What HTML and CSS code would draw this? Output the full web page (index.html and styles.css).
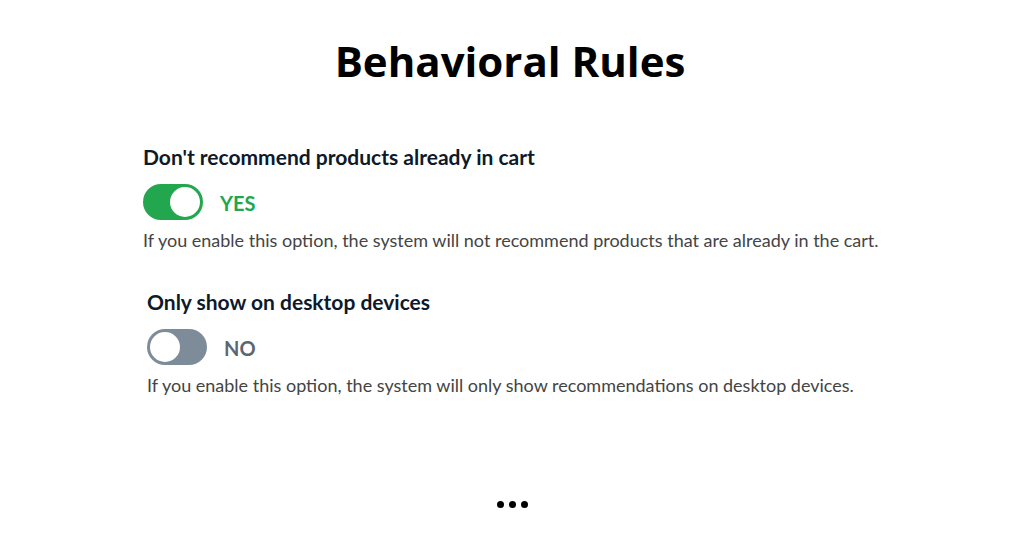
FILE: index.html
```html
<!DOCTYPE html>
<html>
<head>
    <meta charset="utf-8">
    <link rel="stylesheet" href="styles.css">
</head>
<body>
<div class="page">
    <h1 class="title">Behavioral Rules</h1>

    <div class="rule">
        <div class="rule-label">Don't recommend products already in cart</div>
        <div class="rule-switch">
            <span class="toggle toggle-on"><span class="knob"></span></span>
            <span class="state state-on">YES</span>
        </div>
        <p class="rule-help">If you enable this option, the system will not recommend products that are already in the cart.</p>
    </div>

    <div class="rule rule-second">
        <div class="rule-label">Only show on desktop devices</div>
        <div class="rule-switch">
            <span class="toggle toggle-off"><span class="knob"></span></span>
            <span class="state state-off">NO</span>
        </div>
        <p class="rule-help">If you enable this option, the system will only show recommendations on desktop devices.</p>
    </div>

    <div class="more">
        <span></span><span></span><span></span>
    </div>
</div>
</body>
</html>
```

FILE: styles.css
```css
body {
    margin: 0;
    background: #fff;
    font-family: Lato, "Open Sans", sans-serif;
}

.page {
    width: 738px;
    margin: 0 auto;
}

.title {
    margin: 36px 0 0;
    padding-right: 4px;
    font-family: "Open Sans", sans-serif;
    font-weight: 700;
    font-size: 42px;
    line-height: 50px;
    text-align: center;
    color: #000;
}

.rule {
    margin-top: 58px;
}

.rule-second {
    margin-top: 37px;
    margin-left: 4px;
}

.rule-label {
    font-weight: 700;
    font-size: 21px;
    line-height: 26px;
    color: #0d1a2b;
}

.rule-switch {
    display: flex;
    align-items: center;
    gap: 17px;
    margin-top: 14px;
}

.toggle {
    display: flex;
    align-items: center;
    box-sizing: border-box;
    width: 60px;
    height: 36px;
    padding: 3px;
    border-radius: 18px;
}

.toggle-on {
    background: #22a64e;
    justify-content: flex-end;
}

.toggle-off {
    background: #7e8c99;
    justify-content: flex-start;
}

.knob {
    width: 30px;
    height: 30px;
    border-radius: 50%;
    background: #fff;
}

.state {
    padding-top: 2px;
    font-weight: 700;
    font-size: 20px;
    line-height: 24px;
}

.state-on {
    color: #22a64e;
}

.state-off {
    color: #5c6670;
}

.rule-help {
    margin: 8px 0 0;
    font-size: 18px;
    line-height: 24px;
    color: #444;
}

.more {
    display: flex;
    justify-content: center;
    gap: 5px;
    margin-top: 104px;
}

.more span {
    width: 7px;
    height: 7px;
    border-radius: 50%;
    background: #000;
}
```
